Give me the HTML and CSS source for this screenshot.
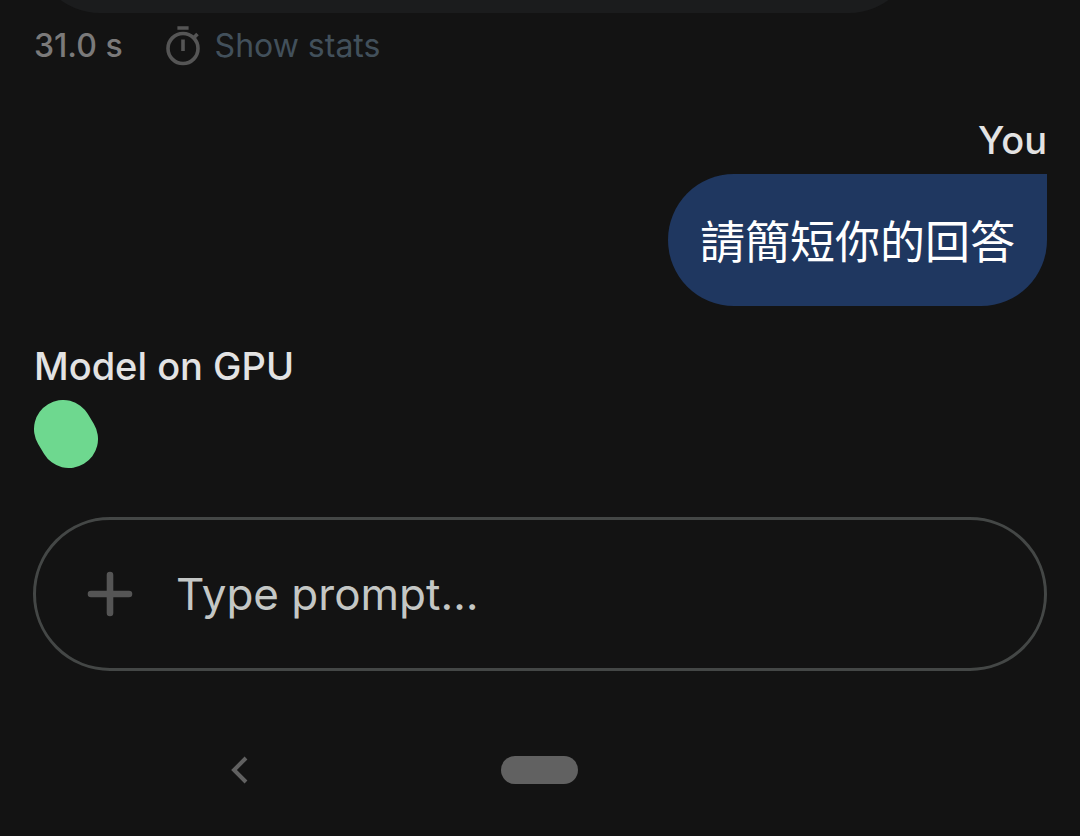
FILE: index.html
```html
<!DOCTYPE html>
<html lang="en">
<head>
    <meta charset="utf-8">
    <meta name="viewport" content="width=device-width, initial-scale=1">
    <title>Chat</title>
    <link rel="stylesheet" href="styles.css">
</head>
<body>
    <main class="chat">
        <div class="bubble bubble-model"></div>
        <div class="stats">
            <span class="latency">31.0 s</span>
            <button type="button" class="stats-button">
                <svg class="timer-icon" viewBox="0 0 36 42" fill="none" stroke="currentColor" stroke-width="3.6" aria-hidden="true">
                    <circle cx="18" cy="23.5" r="15"/>
                    <path d="M12.4 3h11.2M18 14.5v11.500M29 12.500l3.500-3.500"/>
                </svg>
                Show stats
            </button>
        </div>

        <h2 class="sender sender-user">You</h2>
        <div class="bubble bubble-user" lang="zh-Hant">請簡短你的回答</div>

        <h2 class="sender">Model on GPU</h2>
        <svg class="loader" viewBox="0 0 64 68" role="img" aria-label="Loading">
            <path d="M29 29L35 39" stroke="#6ed88f" stroke-width="58" stroke-linecap="round"/>
        </svg>
    </main>

    <form class="prompt">
        <button type="button" class="add-button" aria-label="Add">
            <svg viewBox="0 0 46 46" stroke="currentColor" stroke-width="6.600" stroke-linecap="round" aria-hidden="true">
                <path d="M23 4v38M4 23h38"/>
            </svg>
        </button>
        <input type="text" class="prompt-input" placeholder="Type prompt…" aria-label="Type prompt">
    </form>

    <nav class="system-nav">
        <button type="button" class="back-button" aria-label="Back">
            <svg viewBox="0 0 18 28" fill="none" stroke="currentColor" stroke-width="4" aria-hidden="true">
                <path d="M16 2L4 14l12 12"/>
            </svg>
        </button>
        <button type="button" class="home-button" aria-label="Home"></button>
    </nav>
</body>
</html>
```

FILE: styles.css
```css
* {
    box-sizing: border-box;
}
body {
    margin: 0;
    height: 100vh;
    display: flex;
    flex-direction: column;
    background: #131313;
    color: #e3e3e3;
    font-family: Inter, "Noto Sans CJK TC", sans-serif;
}
button {
    padding: 0;
    border: none;
    background: none;
    color: #555;
    font: inherit;
    cursor: pointer;
}
svg {
    display: block;
}

/* messages stick to the bottom, older ones run off the top */
.chat {
    flex: 1;
    min-height: 0;
    overflow: hidden;
    display: flex;
    flex-direction: column;
    justify-content: flex-end;
    align-items: flex-start;
    padding: 0 33px 49px 34px;
}
.bubble {
    flex-shrink: 0;
    min-height: 132px;
    padding: 35px 32px 29px;
    font-size: 45px;
    line-height: 68px;
}
.bubble-model {
    width: 87%;
    border-radius: 0 66px 66px 66px;
    background: #1b1c1d;
}
.bubble-user {
    align-self: flex-end;
    border-radius: 66px 0 66px 66px;
    background: #1f3760;
    color: #fff;
}
.stats {
    display: flex;
    align-items: center;
    gap: 42px;
    margin: 11px 0 50px;
    font-size: 32px;
    line-height: 44px;
}
.latency {
    color: #7b7a7a;
    font-weight: 500;
}
.stats-button {
    display: flex;
    align-items: center;
    gap: 14px;
    color: #42505b;
}
.timer-icon {
    width: 36px;
    height: 42px;
    color: #555;
}
.sender {
    margin: 0 0 12px;
    font-size: 38px;
    font-weight: 500;
    line-height: 44px;
}
.sender-user {
    align-self: flex-end;
}
.bubble-user + .sender {
    margin-top: 38px;
}
.loader {
    flex-shrink: 0;
    width: 64px;
    height: 68px;
}

.prompt {
    display: flex;
    align-items: center;
    gap: 43px;
    margin: 0 33px;
    padding: 42px 51px;
    border: 3px solid #444746;
    border-radius: 77px;
}
.add-button svg {
    width: 46px;
    height: 46px;
}
.prompt-input {
    flex: 1;
    min-width: 0;
    height: 64px;
    padding: 0;
    border: none;
    outline: none;
    background: none;
    color: #e3e3e3;
    font: inherit;
    font-size: 44px;
}
.prompt-input::placeholder {
    color: #c4c7c5;
    opacity: 1;
}

.system-nav {
    display: grid;
    grid-template-columns: repeat(3, 1fr);
    align-items: center;
    justify-items: center;
    padding: 85px 88px 52px;
    height: 165px;
}
.back-button svg {
    width: 18px;
    height: 28px;
    color: #616161;
}
.home-button {
    width: 77px;
    height: 28px;
    border-radius: 14px;
    background: #616161;
}
```
